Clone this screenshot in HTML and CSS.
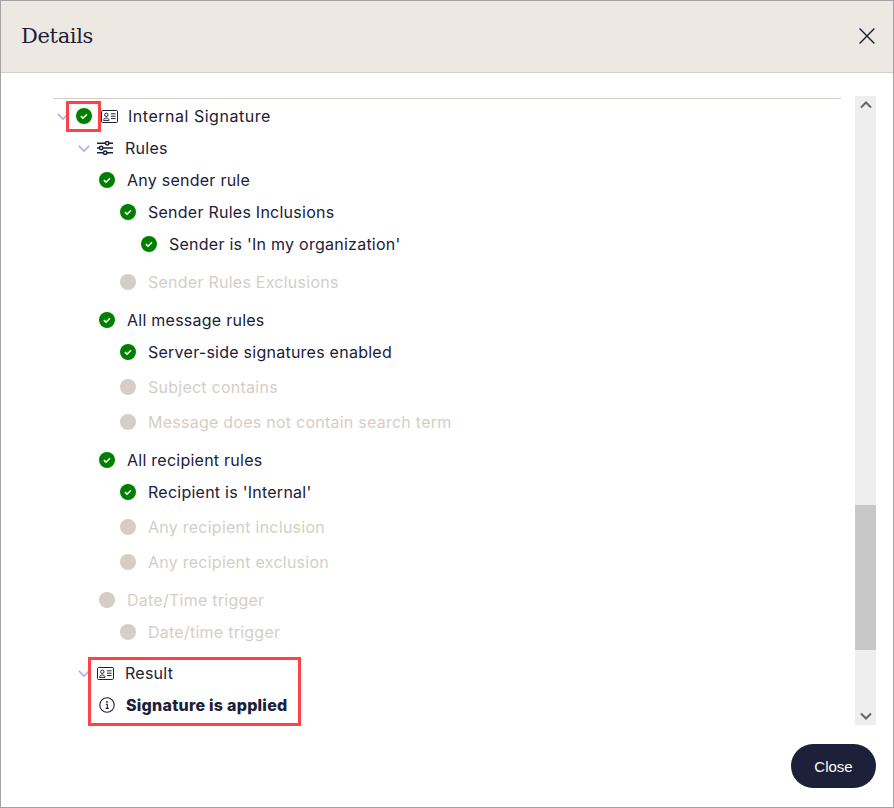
FILE: index.html
```html
<!DOCTYPE html>
<html lang="en">
<head>
<meta charset="utf-8">
<title>Details</title>
<link rel="stylesheet" href="styles.css">
</head>
<body>
<svg class="defs" width="0" height="0" aria-hidden="true">
  <symbol id="ok" viewBox="0 0 16 16"><circle cx="8" cy="8" r="8" fill="#008000"/><path d="M4.9 8.2l2.1 2 4-4" fill="none" stroke="#fff" stroke-width="1.6"/></symbol>
  <symbol id="chev" viewBox="0 0 14 8"><path d="M1 1l6 6 6-6" fill="none" stroke="#a4b3fa" stroke-width="2"/></symbol>
  <symbol id="card" viewBox="0 0 17 13"><rect x=".5" y=".5" width="16" height="12" rx="1.2" fill="none" stroke="#1c2039"/><circle cx="5.3" cy="4.8" r="1.7" fill="none" stroke="#1c2039"/><path d="M2.6 10.4c0-3.2 5.4-3.2 5.4 0zM10 3.8h4.6M10 6.2h4.6M10 8.6h4.6" fill="none" stroke="#1c2039"/></symbol>
  <symbol id="sliders" viewBox="0 0 16 14"><g fill="none" stroke="#1c2039" stroke-width="1.5"><path d="M0 2.2h8.5M12 2.2h4M0 7h2.5M6 7h10M0 11.8h6.5M10 11.8h6"/><circle cx="10.2" cy="2.2" r="1.7"/><circle cx="4.2" cy="7" r="1.7"/><circle cx="8.2" cy="11.8" r="1.7"/></g></symbol>
</svg>
<main class="dialog">
  <header class="head">
    <h1 class="title">Details</h1>
    <button class="x" aria-label="Close"><svg width="16" height="16" viewBox="0 0 16 16"><path d="M.6.6l14.8 14.8M15.4.6L.6 15.4" stroke="#1c2039" stroke-width="1.4" fill="none"/></svg></button>
  </header>
  <div class="body">
    <div class="tree">
      <div class="row root"><svg class="chev"><use href="#chev"/></svg><svg class="dot"><use href="#ok"/></svg><svg class="card"><use href="#card"/></svg><span class="label-root">Internal Signature</span></div>
      <div class="row l1"><svg class="chev"><use href="#chev"/></svg><svg class="sl"><use href="#sliders"/></svg><span>Rules</span></div>
      <div class="row l2"><svg class="dot"><use href="#ok"/></svg><span>Any sender rule</span></div>
      <div class="row l3"><svg class="dot"><use href="#ok"/></svg><span>Sender Rules Inclusions</span></div>
      <div class="row l4"><svg class="dot"><use href="#ok"/></svg><span>Sender is 'In my organization'</span></div>
      <div class="row l3 dim gap"><i class="off"></i><span>Sender Rules Exclusions</span></div>
      <div class="row l2 gap"><svg class="dot"><use href="#ok"/></svg><span>All message rules</span></div>
      <div class="row l3"><svg class="dot"><use href="#ok"/></svg><span>Server-side signatures enabled</span></div>
      <div class="row l3 dim near"><i class="off"></i><span>Subject contains</span></div>
      <div class="row l3 dim near"><i class="off"></i><span>Message does not contain search term</span></div>
      <div class="row l2 gap"><svg class="dot"><use href="#ok"/></svg><span>All recipient rules</span></div>
      <div class="row l3"><svg class="dot"><use href="#ok"/></svg><span>Recipient is 'Internal'</span></div>
      <div class="row l3 dim near"><i class="off"></i><span>Any recipient inclusion</span></div>
      <div class="row l3 dim near"><i class="off"></i><span>Any recipient exclusion</span></div>
      <div class="row l2 dim gap"><i class="off"></i><span>Date/Time trigger</span></div>
      <div class="row l3 dim"><i class="off"></i><span>Date/time trigger</span></div>
      <div class="row l1 wide"><svg class="chev"><use href="#chev"/></svg><svg class="sl res"><use href="#card"/></svg><span>Result</span></div>
      <div class="row l2"><svg class="info" viewBox="0 0 16 16"><circle cx="8" cy="8" r="7.2" fill="none" stroke="#1c2039" stroke-width="1.1"/><path d="M6.8 7.2h1.5v4M6.6 11.4h3.2" fill="none" stroke="#1c2039" stroke-width="1.1"/><circle cx="8" cy="4.9" r=".9" fill="#1c2039"/></svg><strong>Signature is applied</strong></div>
    </div>
    <div class="scroll">
      <svg class="arrow" viewBox="0 0 12 8"><path d="M1 6.5l5-5 5 5" fill="none" stroke="#666" stroke-width="2"/></svg>
      <div class="track"><div class="thumb"></div></div>
      <svg class="arrow" viewBox="0 0 12 8"><path d="M1 1.5l5 5 5-5" fill="none" stroke="#666" stroke-width="2"/></svg>
    </div>
  </div>
  <footer class="foot"><button class="close">Close</button></footer>
  <div class="mark mark-a"></div>
  <div class="mark mark-b"></div>
</main>
</body>
</html>
```
FILE: styles.css
```css
* { box-sizing: border-box; }
html, body { margin: 0; height: 100%; }
body { background: #fff; color: #1c2039; font-family: Inter, "Liberation Sans", sans-serif; overflow: hidden; }
.defs { position: absolute; }
.dialog { position: relative; width: 894px; height: 808px; border: 1px solid #a3a3a3; display: flex; flex-direction: column; background: #fff; }
.head { height: 72px; flex: none; background: #ede8e2; border-bottom: 1px solid #d5cec7; display: flex; align-items: center; justify-content: space-between; padding: 0 18px 0 20px; }
.title { margin: 0; font: 400 21px/1 "DejaVu Serif", "Liberation Serif", serif; letter-spacing: -.35px; color: #1c2039; }
.x { border: 0; background: none; padding: 0; width: 16px; height: 16px; display: block; margin-bottom: 2px; }
.x svg { display: block; }
.body { flex: 1; display: flex; padding: 23px 17px 0 52px; min-height: 0; }
.tree { width: 788px; border-top: 1px solid #d5cec7; padding-top: 1px; margin-top: 2px; margin-right: 14px; }
.row { height: 32px; display: flex; align-items: center; font-size: 16px; letter-spacing: .25px; white-space: nowrap; }
.root { padding-left: 4px; }
.label-root { letter-spacing: .52px; }
.l1 { padding-left: 25px; }
.l2 { padding-left: 46px; }
.l3 { padding-left: 67px; }
.l4 { padding-left: 88px; }
.gap { margin-top: 6px; }
.near { margin-top: 3px; }
.wide { margin-top: 9px; }
.dim { color: #d5cec7; }
.chev { width: 12px; height: 7px; flex: none; margin-right: 7px; }
.dot { width: 16px; height: 16px; flex: none; margin-right: 12px; }
.root .dot { margin-right: 9px; }
.card { width: 17px; height: 13px; flex: none; margin-right: 10px; }
.l1 .sl { margin-right: 12px; }
.sl { width: 16px; height: 14px; flex: none; }
.res { width: 17px; height: 13px; }
.l1 .res { margin-right: 11px; }
.off { width: 16px; height: 16px; flex: none; margin-right: 12px; border-radius: 50%; background: #d5cec7; }
.info { width: 16px; height: 16px; flex: none; margin-right: 11px; }
strong { font-weight: 800; font-size: 16px; letter-spacing: .25px; }
.scroll { width: 21px; height: 629px; background: #eee; display: flex; flex-direction: column; align-items: center; flex: none; }
.arrow { width: 12px; height: 8px; flex: none; margin: 5px 0; }
.track { flex: 1; width: 100%; padding-top: 391px; }
.thumb { height: 145px; background: #c8c8c8; }
.foot { height: 82px; flex: none; display: flex; justify-content: flex-end; align-items: flex-start; padding: 19px 17px 0 0; }
.close { width: 85px; height: 44px; border: 0; border-radius: 22px; background: #1c2039; color: #fff; font: 400 15px "Liberation Sans", Arial, sans-serif; }
.mark { position: absolute; border: 3px solid #ff4245; }
.mark-a { left: 65px; top: 100px; width: 35px; height: 31px; }
.mark-b { left: 87px; top: 656px; width: 213px; height: 69px; }
```
